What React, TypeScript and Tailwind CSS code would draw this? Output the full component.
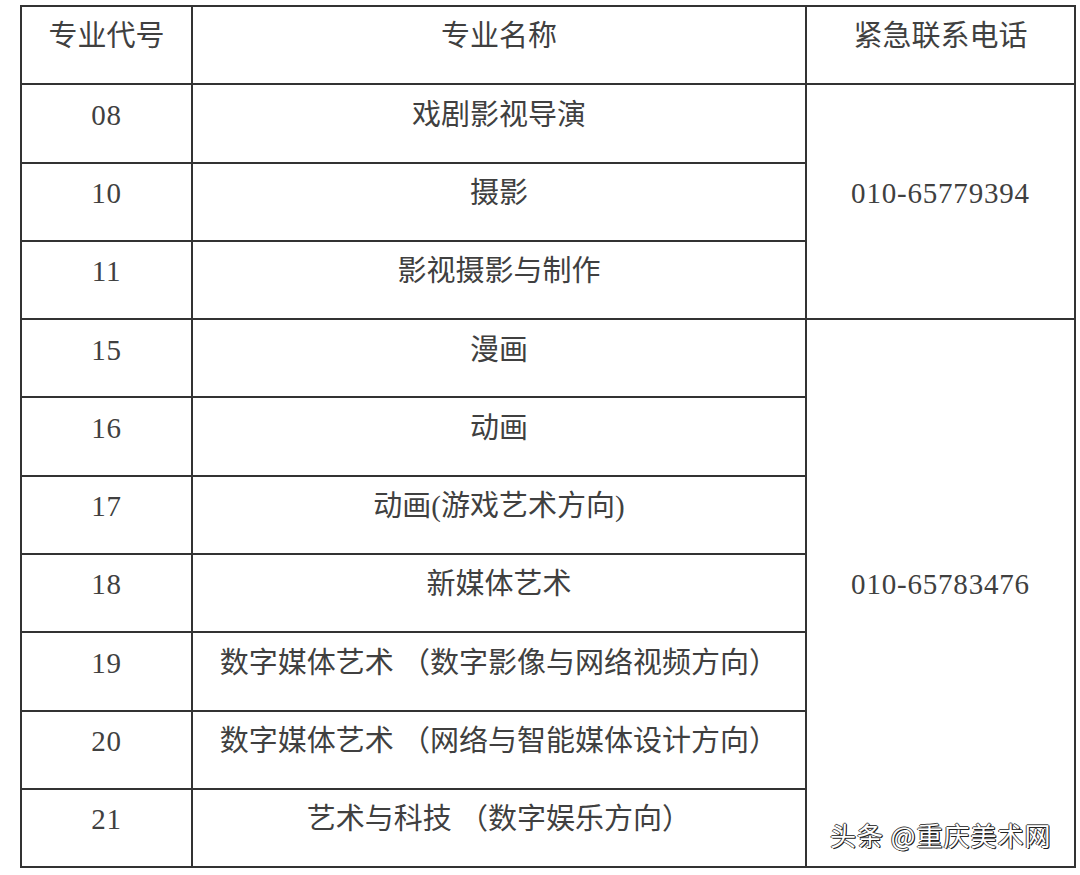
import React from 'react';

type Row = { code: string; name: string };

const group1: Row[] = [
  { code: '08', name: '戏剧影视导演' },
  { code: '10', name: '摄影' },
  { code: '11', name: '影视摄影与制作' },
];

const group2: Row[] = [
  { code: '15', name: '漫画' },
  { code: '16', name: '动画' },
  { code: '17', name: '动画(游戏艺术方向)' },
  { code: '18', name: '新媒体艺术' },
  { code: '19', name: '数字媒体艺术 （数字影像与网络视频方向）' },
  { code: '20', name: '数字媒体艺术 （网络与智能媒体设计方向）' },
  { code: '21', name: '艺术与科技 （数字娱乐方向）' },
];

const cell = 'border-2 border-[#333] text-center align-middle pb-4 h-[78.3px]';
const num = `${cell} tracking-[0.8px]`;

export default function App() {
  return (
    <div className="relative w-[1080px] h-[875px] bg-white overflow-hidden">
      <div className="pl-[20px] pt-[5px]">
        <table
          className="table-fixed border-collapse w-[1054px] text-[29px] text-[#404040]"
          style={{ fontFamily: '"Liberation Serif", "Noto Sans CJK SC", serif' }}
        >
          <colgroup>
            <col className="w-[171px]" />
            <col className="w-[614px]" />
            <col className="w-[269px]" />
          </colgroup>
          <thead>
            <tr>
              <th className={`${cell} font-normal`}>专业代号</th>
              <th className={`${cell} font-normal`}>专业名称</th>
              <th className={`${cell} font-normal`}>紧急联系电话</th>
            </tr>
          </thead>
          <tbody>
            {group1.map((r, i) => (
              <tr key={r.code}>
                <td className={num}>{r.code}</td>
                <td className={cell}>{r.name}</td>
                {i === 0 && (
                  <td className={num} rowSpan={group1.length}>
                    010-65779394
                  </td>
                )}
              </tr>
            ))}
            {group2.map((r, i) => (
              <tr key={r.code}>
                <td className={num}>{r.code}</td>
                <td className={cell}>{r.name}</td>
                {i === 0 && (
                  <td className={num} rowSpan={group2.length}>
                    010-65783476
                  </td>
                )}
              </tr>
            ))}
          </tbody>
        </table>
      </div>

      {/* watermark */}
      <div
        className="absolute left-[830px] top-[815px] text-[26px] text-white tracking-[1px]"
        style={{
          fontFamily: '"Noto Sans CJK SC", sans-serif',
          textShadow: '1px 1px 0 #222, -1px 0 0 #444, 0 -1px 0 #444, 1px 0 0 #222',
        }}
      >
        头条 @重庆美术网
      </div>
    </div>
  );
}
